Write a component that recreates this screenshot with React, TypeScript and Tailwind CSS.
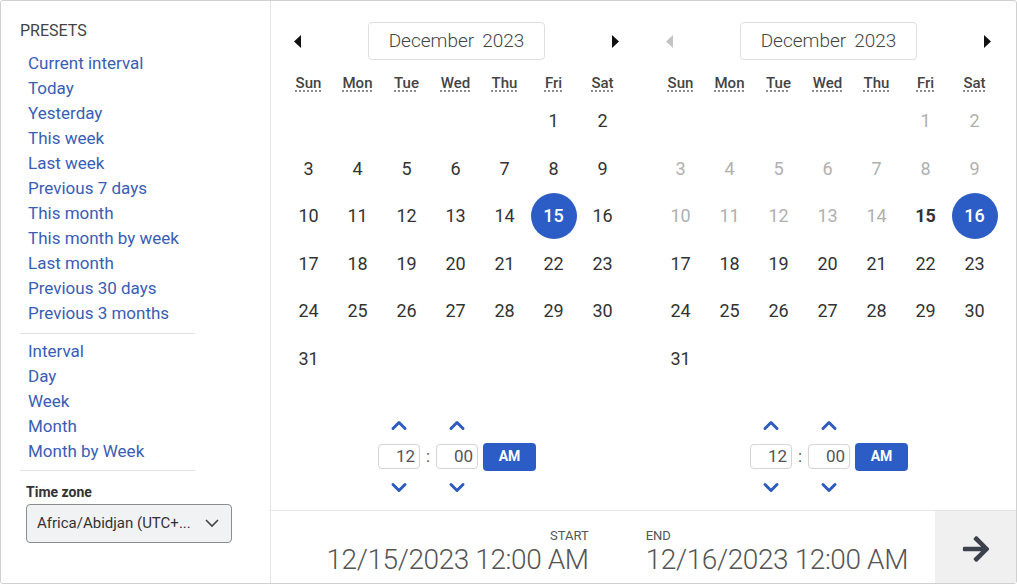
import React from 'react';
import { FaArrowRight } from 'react-icons/fa';

const presets = [
  'Current interval',
  'Today',
  'Yesterday',
  'This week',
  'Last week',
  'Previous 7 days',
  'This month',
  'This month by week',
  'Last month',
  'Previous 30 days',
  'Previous 3 months',
];
const ranges = ['Interval', 'Day', 'Week', 'Month', 'Month by Week'];
const weekdays = ['Sun', 'Mon', 'Tue', 'Wed', 'Thu', 'Fri', 'Sat'];

// December 2023 starts on a Friday
const cells: (number | null)[] = [null, null, null, null, null, ...Array.from({ length: 31 }, (_, i) => i + 1)];

const Caret = ({ dir, disabled }: { dir: 'left' | 'right'; disabled?: boolean }) => (
  <button className="w-[30px] h-[30px] flex items-center justify-center">
    <svg width="8" height="13" viewBox="0 0 8 13">
      <polygon
        points={dir === 'left' ? '7,0 7,13 0,6.5' : '1,0 1,13 8,6.5'}
        fill={disabled ? '#c4c4c4' : '#111'}
      />
    </svg>
  </button>
);

const Chevron = ({ up }: { up?: boolean }) => (
  <svg width="18" height="11" viewBox="0 0 18 11">
    <polyline
      points={up ? '3,8.5 9,2.5 15,8.5' : '3,2.5 9,8.5 15,2.5'}
      fill="none"
      stroke="#2d5bbf"
      strokeWidth="3"
      strokeLinecap="round"
      strokeLinejoin="round"
    />
  </svg>
);

const TimeField = ({ value }: { value: string }) => (
  <div className="flex flex-col items-center">
    <Chevron up />
    <div className="w-[42px] h-[25px] mt-[13px] mb-[13px] border border-[#d4d4d4] rounded-[4px] text-right pr-[4px] text-[17px] leading-[23px] text-[#555]">
      {value}
    </div>
    <Chevron />
  </div>
);

const TimePicker = () => (
  <div className="flex items-center justify-center">
    <TimeField value="12" />
    <span className="w-[16px] text-center text-[17px] text-[#555]">:</span>
    <TimeField value="00" />
    <button className="ml-[5px] w-[53px] h-[28px] bg-[#2c5cc5] rounded-[4px] text-white text-[14px] font-bold">AM</button>
  </div>
);

const Calendar = ({ selected, second }: { selected: number; second?: boolean }) => (
  <div className="w-[372px] flex flex-col">
    <div className="flex items-center justify-between pl-[12px] w-[359px] mt-[21px]">
      <Caret dir="left" disabled={second} />
      <div className="w-[177px] h-[38px] border border-[#dedede] rounded-[4px] flex items-center justify-center gap-[8px] text-[19px] font-light text-[#444]">
        <span>December</span>
        <span>2023</span>
      </div>
      <Caret dir="right" />
    </div>
    <div className="grid grid-cols-[repeat(7,49px)] ml-[13px] mt-[9px]">
      {weekdays.map((d) => (
        <div key={d} className="h-[28px] flex items-center justify-center">
          <abbr className="text-[15px] font-medium text-[#444] underline decoration-dotted underline-offset-[3px] decoration-[#666]">
            {d}
          </abbr>
        </div>
      ))}
      {cells.map((n, i) => {
        const isSel = n === selected;
        const disabled = second && n !== null && n < 15;
        const bold = second && n === 15;
        return (
          <div key={i} className="h-[47.5px] flex items-center justify-center">
            {n !== null &&
              (isSel ? (
                <span className="w-[46px] h-[46px] rounded-full bg-[#2c5cc5] text-white text-[18px] font-medium flex items-center justify-center">
                  {n}
                </span>
              ) : (
                <span
                  className={
                    disabled
                      ? 'text-[18px] text-[#b0b0b0]'
                      : bold
                      ? 'text-[18px] font-bold text-[#333]'
                      : 'text-[18px] text-[#333]'
                  }
                >
                  {n}
                </span>
              ))}
          </div>
        );
      })}
    </div>
    <div className="mt-[38px]">
      <TimePicker />
    </div>
  </div>
);

const App = () => {
  return (
    <div className="w-[1017px] h-[584px] bg-white font-['Roboto',sans-serif] overflow-hidden">
      <div className="w-full h-full border border-[#d0d0d0] rounded-[3px] flex">
        <aside className="w-[270px] shrink-0 border-r border-[#e4e4e4] pt-[19px] pl-[19px]">
          <h3 className="text-[16px] leading-[22px] text-[#444] uppercase">Presets</h3>
          <ul className="mt-[9px] pl-[8px]">
            {presets.map((p) => (
              <li key={p} className="text-[17px] leading-[25px] text-[#3a5db5] cursor-pointer">
                {p}
              </li>
            ))}
          </ul>
          <div className="mt-[7px] w-[175px] border-t border-[#e2e2e2]" />
          <ul className="mt-[5px] pl-[8px]">
            {ranges.map((p) => (
              <li key={p} className="text-[17px] leading-[25px] text-[#3a5db5] cursor-pointer">
                {p}
              </li>
            ))}
          </ul>
          <div className="mt-[6px] w-[175px] border-t border-[#e2e2e2]" />
          <div className="pl-[6px] mt-[12px]">
            <label className="block text-[14px] leading-[18px] font-bold text-[#333]">Time zone</label>
            <div className="mt-[3px] w-[206px] h-[39px] bg-[#f1f2f4] border border-[#8a8d92] rounded-[4px] flex items-center justify-between pl-[10px] pr-[12px]">
              <span className="text-[15px] text-[#333]">Africa/Abidjan (UTC+...</span>
              <svg width="14" height="9" viewBox="0 0 14 9">
                <polyline points="1,1 7,7 13,1" fill="none" stroke="#444" strokeWidth="1.6" />
              </svg>
            </div>
          </div>
        </aside>
        <main className="flex-1 flex flex-col">
          <div className="flex-1 flex">
            <Calendar selected={15} />
            <Calendar selected={16} second />
          </div>
          <div className="h-[73px] border-t border-[#e6e6e6] flex">
            <div className="flex-1 flex justify-end items-center gap-[57px] pr-[27px] pt-[12px]">
              <div className="flex flex-col items-end">
                <span className="text-[13px] leading-[14px] text-[#555] uppercase">Start</span>
                <span className="text-[28px] leading-[34px] font-light tracking-[-0.4px] text-[#555]">12/15/2023 12:00 AM</span>
              </div>
              <div className="flex flex-col items-start">
                <span className="text-[13px] leading-[14px] text-[#555] uppercase">End</span>
                <span className="text-[28px] leading-[34px] font-light tracking-[-0.4px] text-[#555]">12/16/2023 12:00 AM</span>
              </div>
            </div>
            <button className="w-[81px] bg-[#f0f0f0] flex items-center justify-center pt-[3px]">
              <FaArrowRight className="w-[30px] h-[30px] text-[#3b414d]" />
            </button>
          </div>
        </main>
      </div>
    </div>
  );
};

export default App;
